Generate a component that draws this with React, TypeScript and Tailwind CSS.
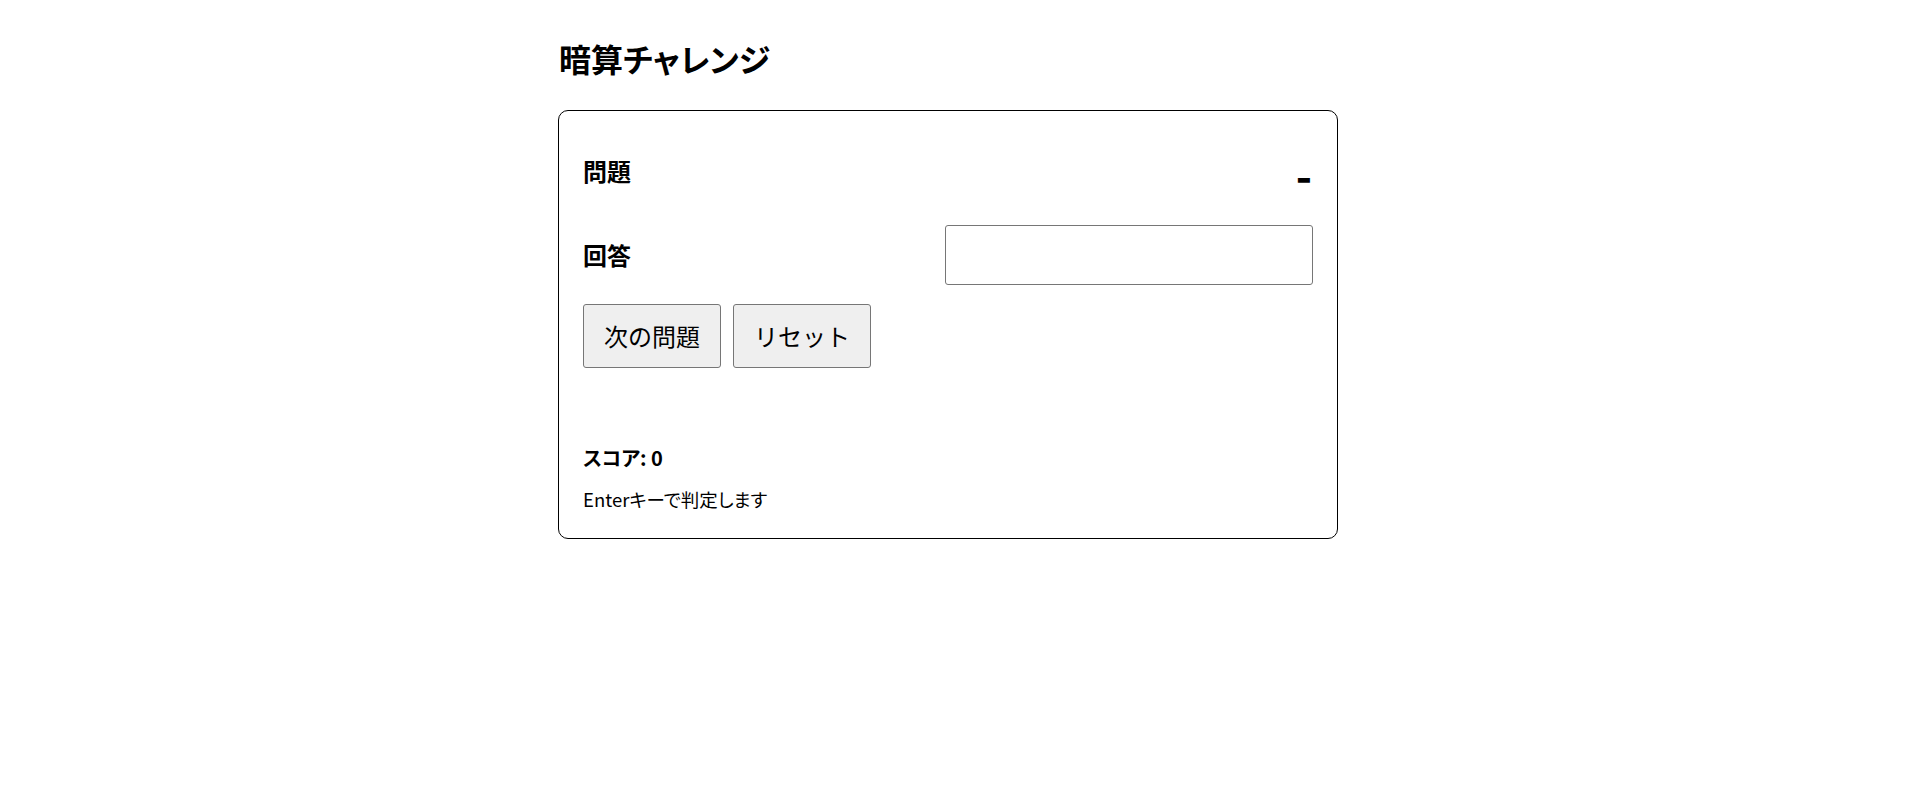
export default function App() {
  return (
    <div className="min-h-screen bg-white text-black font-['Noto_Sans_CJK_JP',sans-serif] [font-feature-settings:'palt']">
      <div className="ml-[558px] w-[780px] pt-[36px]">
        <h1 className="text-[32px] leading-[44px] font-bold mb-[30px] pl-[1px]">暗算チャレンジ</h1>

        <div className="border border-black rounded-[10px] px-[24px] pt-[24px] pb-[25px]">
          <div className="flex items-center justify-between h-[72px]">
            <span className="text-[24px] leading-[36px] font-bold">問題</span>
            <span className="text-[44px] leading-none font-bold pt-[5px] mr-[1px]">-</span>
          </div>

          <div className="flex items-center justify-between h-[60px] mt-[18px]">
            <label htmlFor="answer" className="text-[24px] leading-[36px] font-bold">
              回答
            </label>
            <input
              id="answer"
              type="text"
              className="w-[368px] h-[60px] border border-[#767676] rounded-[3px] px-3 text-[24px] outline-none"
            />
          </div>

          <div className="flex gap-[12px] mt-[19px] [font-feature-settings:normal]">
            <button className="h-[64px] px-[20px] bg-[#efefef] border border-[#767676] rounded-[3px] text-[24px] leading-none">
              次の問題
            </button>
            <button className="h-[64px] px-[20px] bg-[#efefef] border border-[#767676] rounded-[3px] text-[24px] leading-none">
              リセット
            </button>
          </div>

          <p className="mt-[75px] text-[20px] leading-[30px] font-bold">スコア: 0</p>
          <p className="mt-[12px] text-[18.5px] leading-[28px]">Enterキーで判定します</p>
        </div>
      </div>
    </div>
  );
}
